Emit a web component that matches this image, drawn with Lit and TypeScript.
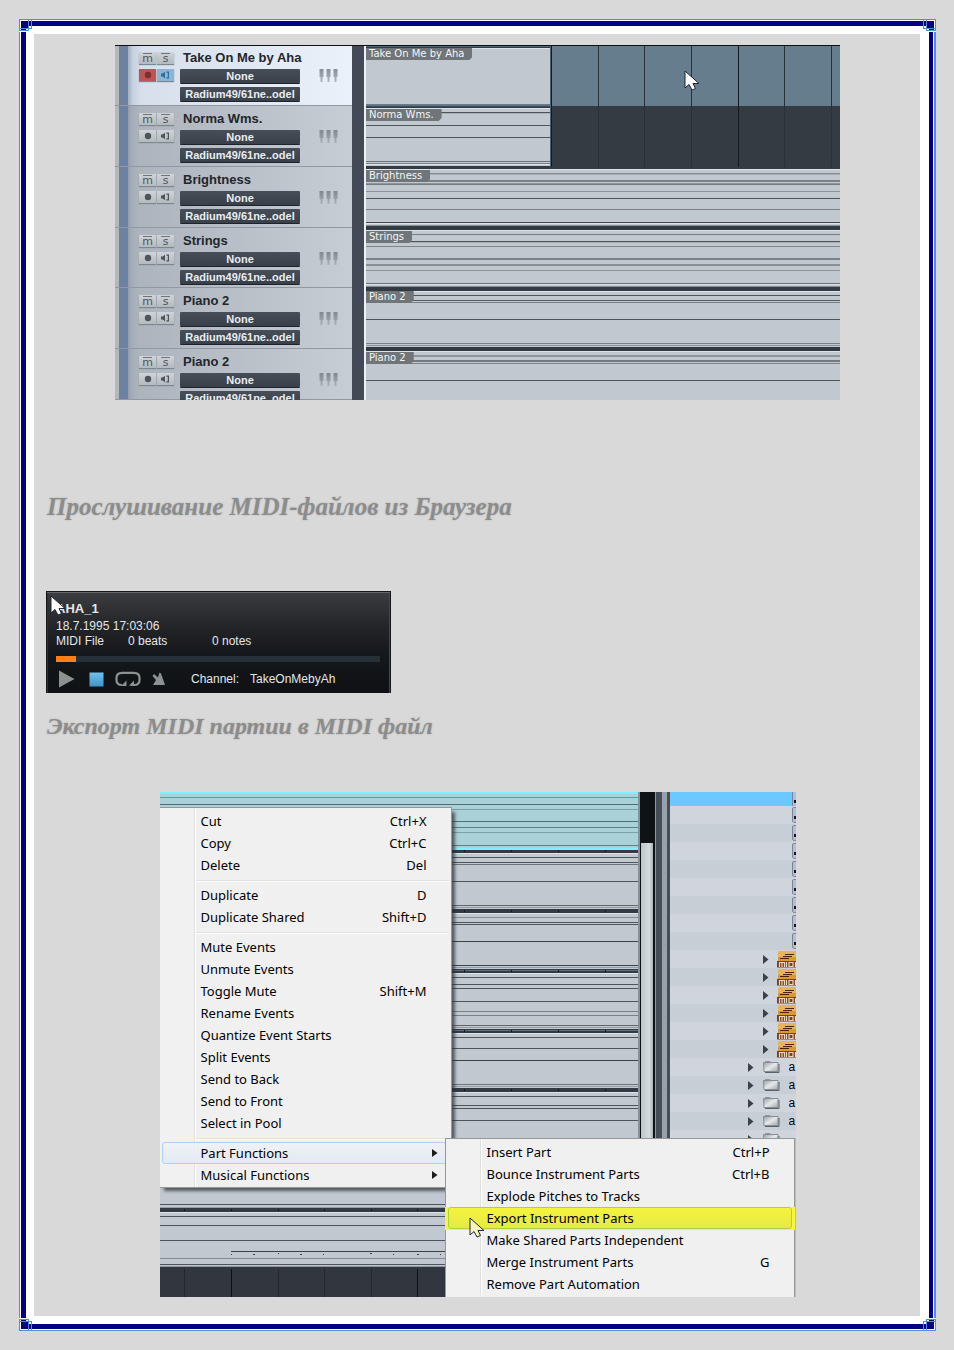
import { LitElement, html, svg, css } from "lit";
import { customElement, property } from "lit/decorators.js";
import { classMap } from "lit/directives/class-map.js";

/* One horizontal note line: y, height, colour */
type Line = [number, number, string];

const DARK = "#343a44";
const NOTE = "#4e5459";
const SOFT = "#858b91";
const PALE = "#dde1e8";

const cursorIcon = (light = true) => html`
  <svg class="cursor" width="16" height="21" viewBox="0 0 16 21" aria-hidden="true">
    <path
      d="M1 1 L1 18 L5 14.5 L8 20 L11.5 18.5 L9 13.5 L15 13.5 Z"
      fill=${light ? "#ffffff" : "#f6f6b8"}
      stroke="#1d2638"
      stroke-width="1"
      stroke-linejoin="round"
    />
  </svg>
`;

@customElement("note-lane")
export class NoteLane extends LitElement {
  @property({ attribute: false }) lines: Line[] = [];
  @property({ attribute: false }) ticks: Line[] = [];
  static styles = css`
    :host {
      display: block;
      overflow: hidden;
      background: #c1c8d0;
    }
    svg {
      display: block;
      width: 100%;
      height: 100%;
    }
  `;
  render() {
    return html`<svg aria-hidden="true" shape-rendering="crispEdges">
      ${this.lines.map(
        ([y, h, c]) => svg`<rect x="0" y=${y} width="100%" height=${h} fill=${c}></rect>`
      )}
      ${this.ticks.map(
        ([x, y, c]) => svg`<rect x=${x} y=${y} width="1" height="2" fill=${c}></rect>`
      )}
    </svg>`;
  }
}

interface Track {
  name: string;
  armed?: boolean;
  short?: boolean;
  lines: Line[];
}

const tracks: Track[] = [
  {
    name: "Take On Me by Aha",
    armed: true,
    short: true,
    lines: [
      [0, 1, "#0c0f14"], [1, 1, "#4f6b7c"], [2, 1, "#2f3d49"], [3, 1, PALE],
      [59, 1, "#6f7a85"], [60, 1, "#58748a"],
    ],
  },
  {
    name: "Norma Wms.",
    short: true,
    lines: [
      [0, 1, "#3d4d59"], [1, 1, DARK], [2, 1, PALE], [6, 1, NOTE], [7, 1, "#a9afb5"],
      [19, 1, NOTE], [31, 1, NOTE], [55, 1, "#6c7278"], [57, 1, "#7c8288"],
      [58, 1, PALE], [60, 1, DARK],
    ],
  },
  {
    name: "Brightness",
    lines: [
      [0, 2, DARK], [2, 1, PALE], [6, 1, SOFT], [7, 1, "#a9adb2"], [13, 2, "#7d8384"],
      [16, 1, "#8e9396"], [17, 1, "#777d82"], [24, 1, "#8d9297"], [31, 1, NOTE],
      [42, 1, "#797f84"], [55, 1, "#45444e"], [56, 1, PALE], [58, 1, "#8a9098"], [59, 2, DARK],
    ],
  },
  {
    name: "Strings",
    lines: [
      [0, 2, DARK], [2, 1, PALE], [6, 1, "#7d7c7e"], [13, 1, NOTE], [14, 1, "#a9adb2"],
      [18, 1, "#7f8487"], [30, 2, "#7b7f87"], [36, 2, "#8a8f93"], [42, 1, "#8d9297"],
      [55, 1, "#6c7072"], [56, 1, PALE], [58, 1, "#8a9098"], [59, 1, DARK],
    ],
  },
  {
    name: "Piano 2",
    lines: [
      [0, 3, DARK], [3, 1, PALE], [7, 1, NOTE], [12, 1, "#565b5f"], [14, 1, "#797f84"],
      [31, 1, NOTE], [55, 1, "#797f84"], [57, 1, "#8d9297"], [59, 2, DARK],
    ],
  },
  {
    name: "Piano 2",
    lines: [
      [0, 2, DARK], [2, 1, PALE], [6, 2, "#8f9498"], [11, 2, "#74797f"], [14, 1, "#7d8287"],
      [31, 1, NOTE],
    ],
  },
];

@customElement("track-header")
export class TrackHeader extends LitElement {
  @property() name = "";
  @property({ type: Boolean }) armed = false;
  static styles = css`
    :host {
      display: block;
      overflow: hidden;
      font-family: "Liberation Sans", Arial, sans-serif;
    }
    .row {
      display: flex;
      box-sizing: border-box;
      height: 100%;
      padding-left: 24px;
      border-bottom: 1px solid #8f98a3;
      background: linear-gradient(to right, #b3b8bd 4px, #6b82a1 4px 13px, #939dab 13px, #a5adb7 17px, #adb4bd 24px, #c6cdd5 100%);
    }
    .row.armed {
      background: linear-gradient(to right, #b3b8bd 4px, #6b82a1 4px 13px, #a3b0c2 13px, #c6d0de 18px, #d6dfeb 26px, #eaf1fb 100%);
    }
    .toggles {
      display: grid;
      grid-template-columns: 17px 17px;
      grid-template-rows: 12px 12px;
      gap: 5px 1px;
      padding-top: 7px;
      width: 35px;
    }
    .toggle {
      position: relative;
      display: flex;
      align-items: center;
      justify-content: center;
      border: 0;
      padding: 0;
      background: linear-gradient(#d0d4d8, #b4babf);
      box-shadow: 0 1px 1px #7f868f;
      color: #4f545b;
      font: 11px/10px "DejaVu Sans", sans-serif;
    }
    .toggle.ms {
      padding-top: 1px;
    }
    .toggle.ms::before {
      content: "";
      position: absolute;
      top: 1px;
      left: 4px;
      right: 4px;
      height: 1px;
      background: #6f757b;
    }
    .armed .rec {
      background: #bd5353;
      color: #7a2f33;
    }
    .armed .mon {
      background: #8ab5d6;
      color: #2f6e9a;
    }
    .fields {
      display: flex;
      flex-direction: column;
      gap: 4px;
      width: 120px;
      margin-left: 6px;
      padding-top: 6px;
    }
    .name {
      padding-left: 3px;
      font-weight: bold;
      font-size: 13px;
      line-height: 14px;
      color: #23262b;
      white-space: nowrap;
    }
    .slot {
      flex: none;
      height: 14px;
      border: 0;
      border-radius: 1px;
      padding: 0;
      background: linear-gradient(#474e58, #3a4049);
      box-shadow: 0 1px 0 #1e232b;
      color: #e9edf1;
      font: bold 11px/14px "Liberation Sans", Arial, sans-serif;
      white-space: nowrap;
    }
    .keys {
      margin: 23px 0 0 19px;
    }
  `;
  render() {
    return html`<div class=${classMap({ row: true, armed: this.armed })}>
      <div class="toggles">
        <button class="toggle ms" aria-label="Mute">m</button>
        <button class="toggle ms" aria-label="Solo">s</button>
        <button class="toggle rec" aria-label="Record">
          <svg width="8" height="8" viewBox="0 0 8 8"><circle cx="4" cy="4" r="3.2" fill="currentColor" /></svg>
        </button>
        <button class="toggle mon" aria-label="Monitor">
          <svg width="9" height="8" viewBox="0 0 9 8">
            <path d="M0 2.6h1.6L4 .8v6.400L1.600 5.400H0z" fill="currentColor" />
            <path d="M5.400 1.200h2v5.600h-2" fill="none" stroke="currentColor" stroke-width="1.200" />
          </svg>
        </button>
      </div>
      <div class="fields">
        <div class="name">${this.name}</div>
        <button class="slot">None</button>
        <button class="slot">Radium49/61ne..odel</button>
      </div>
      <svg class="keys" width="20" height="15" viewBox="0 0 20 15" aria-hidden="true">
        <defs>
          <linearGradient id="k" x1="0" y1="0" x2="0" y2="1">
            <stop offset="0" stop-color="#70777f" />
            <stop offset="1" stop-color="#a3aab3" />
          </linearGradient>
        </defs>
        ${[0, 7, 14].map(
          (x) => svg`<path d="M${x + 0.5} 1h4v8h-1v5h-2v-5h-1z" fill="url(#k)" opacity=".8"></path>`
        )}
      </svg>
    </div>`;
  }
}

@customElement("track-view")
export class TrackView extends LitElement {
  static styles = css`
    :host {
      display: grid;
      grid-template-columns: 237px 12px 2px minmax(0, 1fr);
      grid-template-rows: 61px 61px 61px 60px 61px 51px;
      overflow: hidden;
      position: relative;
    }
    track-header {
      grid-column: 1;
    }
    .gutter {
      grid-column: 2;
      grid-row: 1 / 7;
      background: #434955;
    }
    .edge {
      grid-column: 3;
      grid-row: 1 / 7;
      background: #f0f1f3;
    }
    .lane {
      grid-column: 4;
      display: flex;
      position: relative;
      min-width: 0;
    }
    .lane note-lane {
      flex: 1;
    }
    .lane.short note-lane {
      flex: none;
      width: 184px;
      border-right: 1px solid #4c6272;
    }
    .empty {
      flex: 1;
      background: #353b43;
    }
    .selected .empty {
      background: #667d8d;
    }
    .empty svg {
      display: block;
      width: 100%;
      height: 100%;
    }
    .label {
      position: absolute;
      left: 0;
      top: 3px;
      height: 12px;
      padding: 0 8px 0 3px;
      background: #6f7578;
      clip-path: polygon(0 0, 100% 0, 100% 9px, calc(100% - 3px) 100%, 0 100%);
      color: #f4f6f7;
      font: 10px/12px "DejaVu Sans", sans-serif;
      white-space: nowrap;
    }
    .top {
      position: absolute;
      top: 0;
      left: 0;
      right: 0;
      height: 1px;
      background: #0c0f14;
    }
    .cursor {
      position: absolute;
      left: 569px;
      top: 25px;
    }
  `;
  render() {
    return html`
      ${tracks.map(
        (t, i) => html`
          <track-header .name=${t.name} .armed=${!!t.armed}></track-header>
          <div class=${classMap({ lane: true, short: !!t.short, selected: i === 0 })}>
            <note-lane .lines=${t.lines}></note-lane>
            ${t.short
              ? html`<div class="empty">
                  <svg aria-hidden="true" shape-rendering="crispEdges">
                    ${[0, 47, 93, 140, 187, 233, 280].map(
                      (x, n) => svg`<rect x=${x} y="0" width="1" height="100%"
                        fill=${n === 0 || n === 4 ? "#15181c" : "#2a3038"}></rect>`
                    )}
                  </svg>
                </div>`
              : ""}
            <span class="label">${t.name}</span>
          </div>
        `
      )}
      <div class="gutter"></div>
      <div class="edge"></div>
      <div class="top"></div>
      ${cursorIcon()}
    `;
  }
}

@customElement("midi-preview")
export class MidiPreview extends LitElement {
  static styles = css`
    :host {
      display: block;
      position: relative;
      box-sizing: border-box;
      height: 102px;
      padding: 9px 10px 0 9px;
      border: 1px solid #14171a;
      border-bottom: 0;
      background: linear-gradient(#3b3d41, #24262a 32px, #15181c 60px, #0f1114);
      box-shadow: inset 0 1px 0 #63666a, inset 1px 0 0 #2e3136, inset -1px 0 0 #44474b;
      color: #e4e7e9;
      font-family: "Liberation Sans", Arial, sans-serif;
      font-size: 12px;
      line-height: 15px;
    }
    .title {
      font-size: 13px;
      font-weight: bold;
      line-height: 16px;
      margin-bottom: 2px;
    }
    .info {
      display: grid;
      grid-template-columns: 72px 84px 1fr;
    }
    .seek {
      appearance: none;
      display: block;
      width: 100%;
      height: 6px;
      margin: 7px 0 0;
      background: #263037;
    }
    .seek::-webkit-slider-thumb {
      appearance: none;
      width: 20px;
      height: 6px;
      background: #ff7f1a;
    }
    .transport {
      display: flex;
      align-items: center;
      height: 18px;
      margin-top: 8px;
    }
    .btn {
      display: flex;
      border: 0;
      padding: 0;
      background: none;
    }
    .play { margin-left: 3px; }
    .stop { margin-left: 14px; }
    .loop { margin-left: 11px; }
    .metro { margin-left: 11px; }
    label {
      margin-left: 25px;
      width: 59px;
    }
    select {
      appearance: none;
      border: 0;
      padding: 0;
      margin: 0;
      background: none;
      color: inherit;
      font: inherit;
    }
    .cursor {
      position: absolute;
      left: 3px;
      top: 3px;
    }
  `;
  render() {
    return html`
      <div class="title">AHA_1</div>
      <div>18.7.1995 17:03:06</div>
      <div class="info"><span>MIDI File</span><span>0 beats</span><span>0 notes</span></div>
      <input class="seek" type="range" min="0" max="100" value="0" aria-label="Position" />
      <div class="transport">
        <button class="btn play" aria-label="Play">
          <svg width="16" height="18" viewBox="0 0 16 18"><path d="M0 .5l15.500 8.500L0 17.500z" fill="#8b9290" /></svg>
        </button>
        <button class="btn stop" aria-label="Stop">
          <svg width="15" height="15" viewBox="0 0 15 15">
            <defs><linearGradient id="s" x1="0" y1="0" x2="0" y2="1">
              <stop offset="0" stop-color="#72c1ee" /><stop offset="1" stop-color="#3f93c6" />
            </linearGradient></defs>
            <rect x=".5" y=".5" width="14" height="14" fill="url(#s)" />
          </svg>
        </button>
        <button class="btn loop" aria-label="Loop">
          <svg width="26" height="16" viewBox="0 0 26 16" fill="none" stroke="#8b9290" stroke-width="2.2">
            <path d="M7 14Q1.500 14 1.500 9V7Q1.500 1.800 7 1.800h12Q24.500 1.800 24.500 7V9Q24.500 14 19 14H15.500" />
            <path d="M6 15L11.500 9.500V15zM13.500 15L19 9.500V13z" fill="#8b9290" stroke="none" />
          </svg>
        </button>
        <button class="btn metro" aria-label="Metronome">
          <svg width="14" height="14" viewBox="0 0 14 14">
            <path d="M7.500 .5l1.500 1 4 11.500H1l3-5L.5 4 2 2l4 3.500z" fill="#8b9290" />
          </svg>
        </button>
        <label for="channel">Channel:</label>
        <select id="channel"><option>TakeOnMebyAh</option></select>
      </div>
      ${cursorIcon()}
    `;
  }
}

interface Item {
  text: string;
  keys?: string;
  sub?: boolean;
  state?: string;
}

const mainMenu: (Item | null)[] = [
  { text: "Cut", keys: "Ctrl+X" },
  { text: "Copy", keys: "Ctrl+C" },
  { text: "Delete", keys: "Del" },
  null,
  { text: "Duplicate", keys: "D" },
  { text: "Duplicate Shared", keys: "Shift+D" },
  null,
  { text: "Mute Events" },
  { text: "Unmute Events" },
  { text: "Toggle Mute", keys: "Shift+M" },
  { text: "Rename Events" },
  { text: "Quantize Event Starts" },
  { text: "Split Events" },
  { text: "Send to Back" },
  { text: "Send to Front" },
  { text: "Select in Pool" },
  null,
  { text: "Part Functions", sub: true, state: "open" },
  { text: "Musical Functions", sub: true },
];

const partMenu: (Item | null)[] = [
  { text: "Insert Part", keys: "Ctrl+P" },
  { text: "Bounce Instrument Parts", keys: "Ctrl+B" },
  { text: "Explode Pitches to Tracks" },
  { text: "Export Instrument Parts", state: "marked" },
  { text: "Make Shared Parts Independent" },
  { text: "Merge Instrument Parts", keys: "G" },
  { text: "Remove Part Automation" },
];

@customElement("context-menu")
export class ContextMenu extends LitElement {
  @property({ attribute: false }) items: (Item | null)[] = [];
  static styles = css`
    :host {
      display: block;
      isolation: isolate;
      box-sizing: border-box;
      padding: 2px 2px 1px;
      border: 1px solid #979797;
      background: linear-gradient(to right, #f1f1f1 34px, #e0e0e0 34px 35px, #ffffff 35px 36px, #f0f0f0 36px);
      font-family: "Noto Sans", "Open Sans", sans-serif;
      font-size: 13px;
      color: #000000;
    }
    .item {
      display: flex;
      align-items: center;
      position: relative;
      box-sizing: border-box;
      width: 100%;
      height: 22px;
      padding: 0 21px 0 38px;
      border: 1px solid transparent;
      border-radius: 3px;
      background: none;
      font: inherit;
      line-height: 20px;
      color: inherit;
      text-align: left;
      white-space: nowrap;
    }
    .text {
      flex: 1;
    }
    .item.sub {
      padding-right: 10px;
    }
    .item.open {
      border-color: #aecff7;
      background: linear-gradient(rgba(240, 242, 245, 0.6), #e2eaf5);
    }
    .item.marked {
      border-color: #b3cf3e;
      background: linear-gradient(#f4f43e, #e6ea45);
    }
    .item.marked::before {
      content: "";
      position: absolute;
      inset: -1px -4px -2px;
      z-index: -1;
      background: #f6f63a;
    }
    .rule {
      box-sizing: content-box;
      height: 1px;
      margin: 4px 0 2px 34px;
      border: 0;
      border-bottom: 1px solid #ffffff;
      background: #e0e0e0;
    }
  `;
  render() {
    return this.items.map((it) =>
      it
        ? html`<button class=${classMap({ item: true, sub: !!it.sub, open: it.state === "open", marked: it.state === "marked" })}>
            <span class="text">${it.text}</span>
            ${it.keys ? html`<span>${it.keys}</span>` : ""}
            ${it.sub
              ? html`<svg width="6" height="8" viewBox="0 0 6 8" aria-hidden="true"><path d="M0 0l5.500 4L0 8z" fill="#1c1c1c" /></svg>`
              : ""}
          </button>`
        : html`<hr class="rule" />`
    );
  }
}

const cy = "#7af2fa";
const editorLanes: { h: number; lines: Line[]; kind?: string }[] = [
  {
    h: 61,
    kind: "active",
    lines: [
      [0, 2, cy], [5, 1, "#6d979e"], [12, 1, "#4c6e75"], [17, 1, "#7aa1a7"], [29, 1, "#4c6e75"],
      [35, 1, "#5d8087"], [40, 1, "#7aa1a7"], [53, 1, "#5d8087"], [56, 2, cy], [58, 3, DARK],
    ],
  },
  { h: 60, lines: [[0, 1, PALE], [4, 1, NOTE], [9, 1, NOTE], [11, 1, "#6c7278"], [28, 1, NOTE], [52, 1, "#62676c"], [54, 1, "#969da6"], [56, 4, DARK]] },
  { h: 60, lines: [[0, 1, PALE], [4, 1, SOFT], [9, 1, NOTE], [11, 1, NOTE], [28, 1, "#3e4246"], [52, 1, "#3e4246"], [54, 1, "#969da6"], [56, 1, DARK], [57, 1, "#5c7082"], [58, 2, DARK]] },
  { h: 60, lines: [[0, 1, PALE], [4, 1, NOTE], [11, 1, NOTE], [15, 1, NOTE], [28, 1, NOTE], [38, 1, "#7a8084"], [42, 1, "#7a8084"], [52, 1, "#62676c"], [54, 1, "#969da6"], [56, 1, DARK], [57, 1, "#5c7082"], [58, 2, DARK]] },
  { h: 59, lines: [[0, 1, PALE], [4, 1, NOTE], [15, 1, NOTE], [27, 1, "#3e4246"], [51, 1, "#6c7278"], [53, 1, "#969da6"], [55, 4, DARK]] },
  { h: 60, lines: [[0, 1, PALE], [4, 1, NOTE], [13, 1, NOTE], [16, 1, NOTE], [28, 1, NOTE]] },
  { h: 60, lines: [[52, 1, NOTE], [55, 1, "#969da6"], [56, 4, DARK]] },
  { h: 56, kind: "notes", lines: [[0, 1, PALE], [4, 1, NOTE], [13, 1, NOTE], [28, 1, NOTE], [46, 1, SOFT], [52, 1, NOTE], [54, 1, "#8a929c"], [55, 1, DARK]] },
];

const midiIcon = html`<svg width="19" height="17" viewBox="0 0 19 17" aria-hidden="true">
  <rect x="1" y="0" width="20" height="11" rx="1.500" fill="#e9b35c" />
  <rect x="1" y="6" width="20" height="5" fill="#dc9a2c" />
  <path d="M8 3.500h9M6 5.500h9M3 7.500h9" stroke="#4a2410" stroke-width="1" />
  <rect x="0" y="10" width="20" height="6.500" fill="#77401f" />
  <path d="M2.500 16v-4.500h5V16M5 12v4M9.500 11v5M12 11.500h4V15.500h-4zM18.500 11v5" fill="none" stroke="#ecd6bf" stroke-width="1.200" />
</svg>`;

const folderIcon = html`<svg width="17" height="14" viewBox="0 0 17 14" aria-hidden="true">
  <defs>
    <linearGradient id="f" x1="0" y1="0" x2="1" y2="1">
      <stop offset="0" stop-color="#9aa0a7" />
      <stop offset=".5" stop-color="#e6e8ea" />
      <stop offset="1" stop-color="#a2a6aa" />
    </linearGradient>
  </defs>
  <path d="M2 1h5l1 1.500h7v2H2z" fill="#8d98a4" />
  <path d="M.5 2.500h14.500v9H1z" fill="url(#f)" stroke="#878d94" />
  <path d="M2 12.500h14V4" fill="none" stroke="#5c6268" stroke-width="1" />
</svg>`;

const arrowIcon = html`<svg class="arrow" width="6" height="9" viewBox="0 0 6 9" aria-hidden="true"><path d="M0 0l5.500 4.500L0 9z" fill="#3a4347" /></svg>`;

@customElement("editor-view")
export class EditorView extends LitElement {
  static styles = css`
    :host {
      display: flex;
      position: relative;
      overflow: hidden;
      height: 505px;
      font-family: "Liberation Sans", Arial, sans-serif;
    }
    .lanes {
      flex: 1;
      min-width: 0;
    }
    .lanes note-lane.active {
      background: #abd1d8;
    }
    .notes {
      display: block;
    }
    .grid {
      display: block;
      width: 100%;
      height: 29px;
      background: #32373f;
    }
    .scroll {
      flex: none;
      box-sizing: border-box;
      width: 18px;
      border-left: 2px solid #87909a;
      border-right: 1px solid #8e98a2;
      background: #0f1316;
      padding: 51px 2px 0 1px;
    }
    .thumb {
      height: 100%;
      background: linear-gradient(to right, #bcc6cb, #d5dcdf 70%, #aab2b6);
    }
    .bars {
      flex: none;
      width: 14px;
      background: linear-gradient(to right, #454d58 6px, #99a2ab 6px 11px, #454d58 11px);
    }
    ul {
      flex: none;
      width: 126px;
      margin: 0;
      padding: 0;
      list-style: none;
      background: #c8ced6;
      font-size: 12px;
    }
    li {
      display: flex;
      align-items: center;
      justify-content: flex-end;
      height: 18px;
      overflow: hidden;
      background: #c8ced6;
    }
    li:nth-child(even) {
      background: #d0d4dd;
    }
    li.top {
      height: 14px;
      background: #6bc9ff;
    }
    .arrow {
      margin-right: 8px;
    }
    .folder .arrow {
      margin-right: 9px;
    }
    .folder span {
      width: 7px;
      margin-left: 9px;
      overflow: hidden;
    }
    .main,
    .part {
      position: absolute;
    }
    .main {
      left: -1px;
      top: 15px;
      width: 293px;
      box-shadow: 4px 4px 3px -1px rgba(40, 45, 50, 0.7);
    }
    .part {
      left: 285px;
      top: 346px;
      width: 350px;
      height: 165px;
      box-shadow: 1px 0 0 #b9bcc0;
    }
    .cursor {
      position: absolute;
      left: 309px;
      top: 425px;
    }
  `;
  render() {
    const piano = html`<svg width="4" height="16" viewBox="0 0 4 16" aria-hidden="true">
      <path d="M4 .5H1.500Q.5 .5 .5 2v12.500q0 1 3.500 1" fill="#b3bfd8" stroke="#7c8593" />
      <path d="M2 9h2v3H2z" fill="#14171b" />
    </svg>`;
    return html`
      <div class="lanes">
        ${editorLanes.map((l) => {
          const ticks: Line[] = [24, 71, 118, 164, 211, 257, 304, 351, 398, 445].map((x) => [x, l.h - 3, "#15181d"]);
          if (l.kind === "notes") {
            return html`<svg class="notes" width="100%" height=${l.h} shape-rendering="crispEdges" aria-hidden="true">
              <rect width="100%" height="100%" fill="#c1c8d0" />
              ${l.lines.map(([y, h, c]) => svg`<rect x="0" y=${y} width="100%" height=${h} fill=${c}></rect>`)}
              <rect x="71" y="39" width="100%" height="1" fill="#3e4246" />
              ${[71, 93, 118, 140, 163, 210, 233, 257, 280].map(
                (x, n) => svg`<rect x=${x} y=${n === 2 || n === 5 ? 41 : 42} width=${n % 2 ? 2 : 1} height="1" fill="#3e4246"></rect>`
              )}
            </svg>`;
          }
          return html`<note-lane class=${l.kind ?? ""} style="height:${l.h}px" .lines=${l.lines} .ticks=${ticks}></note-lane>`;
        })}
        <svg class="grid" shape-rendering="crispEdges" aria-hidden="true">
          ${[24, 71, 118, 164, 211, 257].map(
            (x, n) => svg`<rect x=${x} y="1" width="1" height="100%" fill=${n % 4 === 1 ? "#0e1013" : "#23272c"}></rect>`
          )}
        </svg>
      </div>
      <div class="scroll"><div class="thumb"></div></div>
      <div class="bars"></div>
      <ul>
        <li class="top">${piano}</li>
        ${Array.from({ length: 8 }, () => html`<li>${piano}</li>`)}
        ${Array.from({ length: 6 }, () => html`<li>${arrowIcon}${midiIcon}</li>`)}
        ${Array.from({ length: 4 }, () => html`<li class="folder">${arrowIcon}${folderIcon}<span>a</span></li>`)}
        <li class="folder">${arrowIcon}${folderIcon}<span></span></li>
      </ul>
      <context-menu class="main" .items=${mainMenu}></context-menu>
      <context-menu class="part" .items=${partMenu}></context-menu>
      ${cursorIcon(false)}
    `;
  }
}

@customElement("app-root")
export class AppRoot extends LitElement {
  static styles = css`
    :host {
      display: block;
      box-sizing: border-box;
      min-height: 100vh;
      padding: 19px 18px 19px 19px;
      border-right: 1px solid #ffffff;
      background: #d9d9d9;
    }
    .outer {
      position: relative;
      padding: 1px;
      border: 1px solid #558ed5;
      border-right-width: 2px;
      background: #ffffff;
    }
    .inner {
      padding: 8px 9px 8px 8px;
      border: 5px solid #000080;
      border-right-width: 4px;
      background: #ffffff;
    }
    .corner {
      position: absolute;
    }
    .tl { left: -1px; top: -1px; }
    .tr { right: -2px; top: -1px; transform: scaleX(-1); }
    .bl { left: -1px; bottom: -1px; transform: scaleY(-1); }
    .br { right: -2px; bottom: -1px; transform: scale(-1, -1); }
    main {
      padding: 11px 11px 19px 12px;
      background: #d9d9d9;
    }
    track-view {
      max-width: 725px;
      margin: 0 auto;
    }
    h2 {
      margin: 0;
      padding-left: 1px;
      font: italic bold 24px/30px "Liberation Serif", "Times New Roman", serif;
      color: #8c8c8c;
      text-shadow: 0 0 2px #b0b0b0;
    }
    .listen {
      margin-top: 92px;
      font-size: 25px;
    }
    midi-preview {
      max-width: 345px;
      margin-top: 69px;
    }
    .export {
      margin-top: 18px;
    }
    editor-view {
      max-width: 636px;
      margin: 51px auto 0;
    }
  `;
  render() {
    return html`<div class="outer">
      <div class="inner">
        <main>
          <track-view></track-view>
          <h2 class="listen">Прослушивание MIDI-файлов из Браузера</h2>
          <midi-preview></midi-preview>
          <h2 class="export">Экспорт MIDI партии в MIDI файл</h2>
          <editor-view></editor-view>
        </main>
      </div>
      ${["tl", "tr", "bl", "br"].map(
        (c) => html`<svg class="corner ${c}" width="13" height="13" viewBox="0 0 13 13" shape-rendering="crispEdges" aria-hidden="true">
          <path d="M0 0h13v10h-3v3H0z" fill="#ffffff" />
          <path d="M2 2h7v7H2z" fill="#000080" />
          <path d="M2 9h5v3H2zM9 2h3v5H9z" fill="#000080" />
          <path d="M.5 .5h12v9H.5zM.5 .5h9v11H.5z" fill="none" stroke="#558ed5" />
        </svg>`
      )}
    </div>`;
  }
}
